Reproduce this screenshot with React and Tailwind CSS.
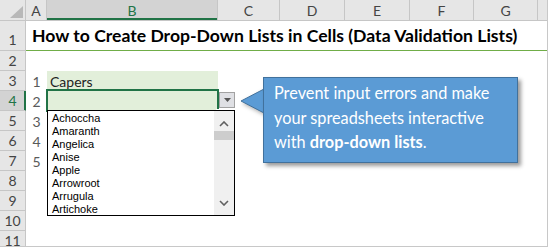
const COLS = ['A', 'B', 'C', 'D', 'E', 'F', 'G', ''];
const ROWS = [1, 2, 3, 4, 5, 6, 7, 8, 9, 10, 11];
const ITEMS = ['Achoccha', 'Amaranth', 'Angelica', 'Anise', 'Apple', 'Arrowroot', 'Arrugula', 'Artichoke'];

const font = "font-['Lato','Open_Sans',sans-serif]";

function Chevron({ down }) {
  return (
    <svg width="10" height="6" viewBox="0 0 10 6" className="block">
      <path
        d={down ? 'M1 1 L5 5 L9 1' : 'M1 5 L5 1 L9 5'}
        fill="none"
        stroke="#606060"
        strokeWidth="1.6"
      />
    </svg>
  );
}

function ColHeader() {
  return (
    <div className="flex h-[21px] border-b border-[#c6c6c6] bg-[#e6e6e6]">
      <div className="relative w-[26px] shrink-0 border-r border-[#c6c6c6]">
        <svg width="13" height="12" viewBox="0 0 13 12" className="absolute left-[10px] top-[6px]">
          <polygon points="13,0 13,12 0,12" fill="#b8b8b8" />
        </svg>
      </div>
      {COLS.map((c, i) => (
        <div
          key={i}
          className={
            'flex shrink-0 items-center justify-center border-r border-[#c6c6c6] text-[14px] ' +
            (c === 'B'
              ? 'bg-[#d3d3d3] text-[#217346] shadow-[inset_0_-2px_0_#217346] '
              : 'text-[#444] ') +
            (i === 0 ? 'w-[21px]' : i === 1 ? 'w-[171px]' : i === 2 ? 'w-[62px]' : i < 5 ? 'w-[65px]' : i < 7 ? 'w-[64px]' : 'w-[10px]')
          }
        >
          {c}
        </div>
      ))}
    </div>
  );
}

function RowHead({ n, h, selected }) {
  return (
    <div
      className={
        'flex w-[26px] shrink-0 items-center justify-center border-b border-r text-[14px] ' +
        (h === 30 ? 'h-[30px] pt-[8px] ' : 'h-[20px] ') +
        (selected
          ? 'border-b-[#c6c6c6] border-r-[#217346] bg-[#d3d3d3] text-[#217346] shadow-[inset_-1px_0_0_#217346]'
          : 'border-[#c6c6c6] bg-[#e6e6e6] text-[#444]')
      }
    >
      {n}
    </div>
  );
}

function Callout() {
  return (
    <div className="absolute left-[241px] top-[77px]">
      <svg width="24" height="26" viewBox="0 0 24 26" className="absolute left-0 top-[12px] drop-shadow-[2px_2px_2px_rgba(0,0,0,0.35)]">
        <polygon points="23,0 0,12 23,24" fill="#5b9bd5" />
        <polyline points="23,0 0,12 23,24" fill="none" stroke="#41719c" strokeWidth="1" />
      </svg>
      <div className="relative ml-[22px] h-[86px] w-[255px] border border-[#41719c] bg-[#5b9bd5] pl-[10px] pt-[3px] text-[16.3px] leading-[24.5px] text-white shadow-[3px_3px_4px_rgba(0,0,0,0.4)]">
        Prevent input errors and make
        <br />
        your spreadsheets interactive
        <br />
        with <b>drop-down lists</b>.
      </div>
      <div className="absolute left-[23px] top-[12px] h-[24px] w-[2px] bg-[#5b9bd5]" />
    </div>
  );
}

function Dropdown() {
  return (
    <>
      <div className="absolute left-[219px] top-[92px] flex h-[16px] w-[16px] items-center justify-center border border-[#a2a2a2] bg-[#dfe0e4]">
        <svg width="7" height="4" viewBox="0 0 7 4">
          <polygon points="0,0 7,0 3.5,4" fill="#555" />
        </svg>
      </div>
      <div className="absolute left-[47px] top-[110px] flex h-[106px] w-[188px] border border-black bg-white">
        <div className="flex-1 pl-[4px] pt-[1px] font-['Liberation_Sans',Arial,sans-serif] text-[11px] leading-[13px] text-black">
          {ITEMS.map((t) => (
            <div key={t}>{t}</div>
          ))}
        </div>
        <div className="flex w-[20px] flex-col items-center bg-[#f0f0f0]">
          <div className="mt-[10px]">
            <Chevron />
          </div>
          <div className="mt-[4px] h-[9px] w-full bg-[#cdcdcd]" />
          <div className="mt-auto mb-[9px]">
            <Chevron down />
          </div>
        </div>
      </div>
    </>
  );
}

export default function App() {
  return (
    <div className={'relative h-[248px] w-[550px] overflow-hidden bg-white ' + font}>
      <div className="h-[247px] w-[548px] overflow-hidden border-b border-r border-[#c8c8c8]">
        <ColHeader />
        {ROWS.map((n) => (
          <div key={n} className="flex">
            <RowHead n={n} h={n === 1 ? 30 : 20} selected={n === 4} />
            {n === 1 && (
              <div className="flex h-[30px] flex-1 items-end border-b border-[#70ad47] pb-[3px] pl-[6px] text-[17.6px] font-bold leading-[22px] whitespace-nowrap text-black">
                How to Create Drop-Down Lists in Cells (Data Validation Lists)
              </div>
            )}
            {n > 1 && (
              <>
                <div className="flex h-[20px] w-[21px] shrink-0 items-center justify-center text-[14px] text-[#5a5a5a]">
                  {n >= 3 && n <= 7 ? n - 2 : ''}
                </div>
                <div
                  className={
                    'relative flex h-[20px] w-[171px] shrink-0 items-center pl-[3px] text-[14px] text-[#222] ' +
                    (n === 3 || n === 4 ? 'bg-[#e2efda]' : '')
                  }
                >
                  {n === 3 ? 'Capers' : ''}
                  {n === 4 && (
                    <>
                      <div className="absolute inset-x-[-1px] top-[-2px] bottom-[-1px] border-2 border-[#217346]" />
                      <div className="absolute right-[-3px] bottom-[-3px] h-[5px] w-[5px] border border-white bg-[#217346]" />
                    </>
                  )}
                </div>
              </>
            )}
          </div>
        ))}
      </div>
      <Dropdown />
      <Callout />
    </div>
  );
}
